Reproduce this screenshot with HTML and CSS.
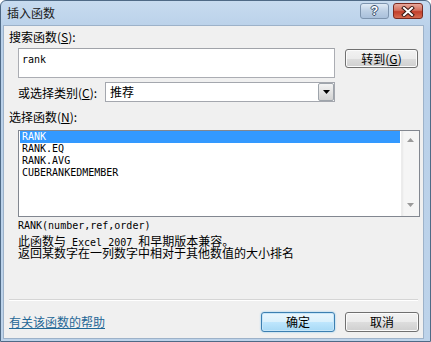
FILE: index.html
```html
<!DOCTYPE html>
<html lang="zh-CN">
<head>
<meta charset="utf-8">
<title>插入函数</title>
<link rel="stylesheet" href="styles.css">
</head>
<body>
<div class="window">
  <div class="titlebar">
    <span class="title">插入函数</span>
    <div class="caption-btns">
      <span class="cap help">?</span>
      <span class="cap close">
        <svg width="14" height="11" viewBox="0 0 14 11"><path d="M3 2 L11 9 M11 2 L3 9" stroke="#3b1a14" stroke-width="4" stroke-linecap="square"/><path d="M3 2 L11 9 M11 2 L3 9" stroke="#ffffff" stroke-width="2" stroke-linecap="square"/></svg>
      </span>
    </div>
  </div>
  <div class="client">
    <div class="label">搜索函数(<u>S</u>):</div>
    <div class="search-row">
      <div class="textbox"><span class="m">rank</span></div>
      <button class="btn go">转到(<u>G</u>)</button>
    </div>
    <div class="cat-row">
      <span class="cat-label">或选择类别(<u>C</u>):</span>
      <div class="combo">
        <span class="combo-text">推荐</span>
        <span class="combo-arrow"><svg width="7" height="4" viewBox="0 0 7 4"><path d="M0 0 H7 L3.5 4 Z" fill="#000"/></svg></span>
      </div>
    </div>
    <div class="label label-n">选择函数(<u>N</u>):</div>
    <div class="listbox">
      <div class="items">
        <div class="item selected">RANK</div>
        <div class="item">RANK.EQ</div>
        <div class="item">RANK.AVG</div>
        <div class="item">CUBERANKEDMEMBER</div>
      </div>
      <div class="scrollbar">
        <svg width="7" height="4" viewBox="0 0 7 4"><path d="M0 4 H7 L3.5 0 Z" fill="#9a9a9a"/></svg>
        <svg width="7" height="4" viewBox="0 0 7 4"><path d="M0 0 H7 L3.5 4 Z" fill="#9a9a9a"/></svg>
      </div>
    </div>
    <div class="syntax m">RANK(number,ref,order)</div>
    <div class="desc">
      <div class="line">此函数与<span class="m"> Excel 2007 </span>和早期版本兼容。</div>
      <div class="line">返回某数字在一列数字中相对于其他数值的大小排名</div>
    </div>
    <div class="separator"></div>
    <div class="footer">
      <a class="help-link" href="#">有关该函数的帮助</a>
      <div class="footer-btns">
        <button class="btn default">确定</button>
        <button class="btn">取消</button>
      </div>
    </div>
  </div>
</div>
</body>
</html>
```
FILE: styles.css
```css
* { box-sizing: border-box; }
body {
  margin: 0;
  font-family: "Noto Sans CJK SC", "Liberation Sans", sans-serif;
  font-size: 12px;
  color: #000;
}
u { text-decoration: underline; text-underline-offset: 1px; }
.m {
  font-family: "DejaVu Sans Mono", "Liberation Mono", monospace;
  font-size: 10px;
}
.window {
  width: 431px;
  height: 342px;
  display: flex;
  flex-direction: column;
  background: linear-gradient(#c7dbef, #b9d0e9 30px, #bdd3ea);
  border: 1px solid #4f6a86;
  border-radius: 6px 6px 0 0;
}
.titlebar {
  height: 24px;
  display: flex;
  align-items: flex-start;
  padding: 0 7px 0 6px;
  flex-shrink: 0;
}
.title {
  line-height: 24px;
  color: #1a1a1a;
}
.caption-btns {
  margin-left: auto;
  display: flex;
  gap: 4px;
  padding-top: 2px;
}
.cap {
  height: 16px;
  border-radius: 3px;
  display: flex;
  align-items: center;
  justify-content: center;
}
.help {
  width: 29px;
  border: 1px solid #7d94ae;
  background: linear-gradient(#e0ebf6, #bccfe4 50%, #a9c0db);
  color: #fff;
  font-family: "Liberation Sans", sans-serif;
  font-weight: bold;
  font-size: 12px;
  line-height: 14px;
  text-shadow: 0 0 1px #3e5470, 1px 0 0 #3e5470, -1px 0 0 #3e5470, 0 1px 0 #3e5470, 0 -1px 0 #3e5470;
}
.close {
  width: 30px;
  border: 1px solid #7a2a20;
  background: linear-gradient(#e9a99b, #d4705e 45%, #c23f2b 55%, #d66a4f);
}
.client {
  flex: 1;
  margin: 0 6px 2px 2px;
  background: #f0f0f0;
  border: 1px solid #9db2c9;
  display: flex;
  flex-direction: column;
  padding: 4px 3px 6px 5px;
}
.label {
  line-height: 14px;
  height: 14px;
}
.search-row {
  margin-top: 4px;
  margin-left: 9px;
  display: flex;
  align-items: flex-start;
  gap: 10px;
}
.textbox {
  width: 317px;
  height: 30px;
  border: 1px solid #abadb3;
  border-top-color: #a0a3a9;
  background: #fff;
  padding: 3px 3px;
  line-height: 12px;
}
.btn {
  font-family: "Noto Sans CJK SC", "Liberation Sans", sans-serif;
  font-size: 12px;
  color: #000;
  width: 74px;
  height: 20px;
  padding: 0;
  line-height: 16px;
  border: 1px solid #707070;
  border-radius: 3px;
  background: linear-gradient(#f2f2f2, #ebebeb 50%, #dddddd 51%, #cfcfcf);
  box-shadow: inset 0 0 0 1px #fbfbfb;
}
.go {
  width: 73px;
  height: 19px;
  margin-top: 1px;
}
.cat-row {
  margin-top: 4px;
  margin-left: 9px;
  display: flex;
  align-items: center;
  height: 20px;
}
.cat-label {
  width: 87px;
}
.combo {
  width: 230px;
  height: 20px;
  border: 1px solid #a4a7ae;
  background: #fff;
  display: flex;
  align-items: center;
  padding-left: 4px;
}
.combo-text { line-height: 16px; }
.combo-arrow {
  margin-left: auto;
  width: 16px;
  height: 18px;
  border: 1px solid #9ea4ab;
  border-radius: 2px;
  background: linear-gradient(#f4f4f4, #e3e3e3 50%, #d2d2d2);
  display: flex;
  align-items: center;
  justify-content: center;
}
.label-n { margin-top: 8px; }
.listbox {
  margin-top: 6px;
  margin-left: 9px;
  height: 87px;
  border: 1px solid #828790;
  background: #fff;
  display: flex;
}
.items {
  flex: 1;
  padding: 0 1px;
}
.item {
  height: 12px;
  line-height: 12px;
  padding-left: 2px;
  font-family: "DejaVu Sans Mono", "Liberation Mono", monospace;
  font-size: 10px;
}
.item.selected {
  background: #3399ff;
  color: #fff;
}
.scrollbar {
  width: 18px;
  background: linear-gradient(90deg, #e8e8e8, #f5f5f5 2px, #f5f5f5);
  border-left: 1px solid #ececec;
  display: flex;
  flex-direction: column;
  align-items: center;
  justify-content: space-between;
  padding: 7px 0 9px;
}
.syntax {
  margin-top: 3px;
  margin-left: 9px;
  line-height: 12px;
  height: 12px;
}
.desc {
  margin-top: 3px;
  margin-left: 9px;
}
.line {
  height: 12px;
  line-height: 12px;
  white-space: nowrap;
}
.separator {
  margin-top: auto;
  height: 1px;
  margin-left: 0;
  margin-right: 2px;
  background: #d5d5d5;
  box-shadow: 0 1px 0 #fff;
}
.footer {
  margin-top: 12px;
  height: 20px;
  display: flex;
  align-items: center;
}
.help-link {
  color: #1f6796;
  text-decoration: underline;
  line-height: 16px;
}
.footer-btns {
  margin-left: auto;
  margin-right: 1px;
  display: flex;
  gap: 10px;
}
.btn.default {
  border-color: #3c7fb1;
  background: linear-gradient(#eaf6fd, #d9f0fc 50%, #bee6fd 51%, #a7d9f5);
  box-shadow: inset 0 0 0 1px #c6e6f9, 0 0 2px #7ec5ee;
}
```
